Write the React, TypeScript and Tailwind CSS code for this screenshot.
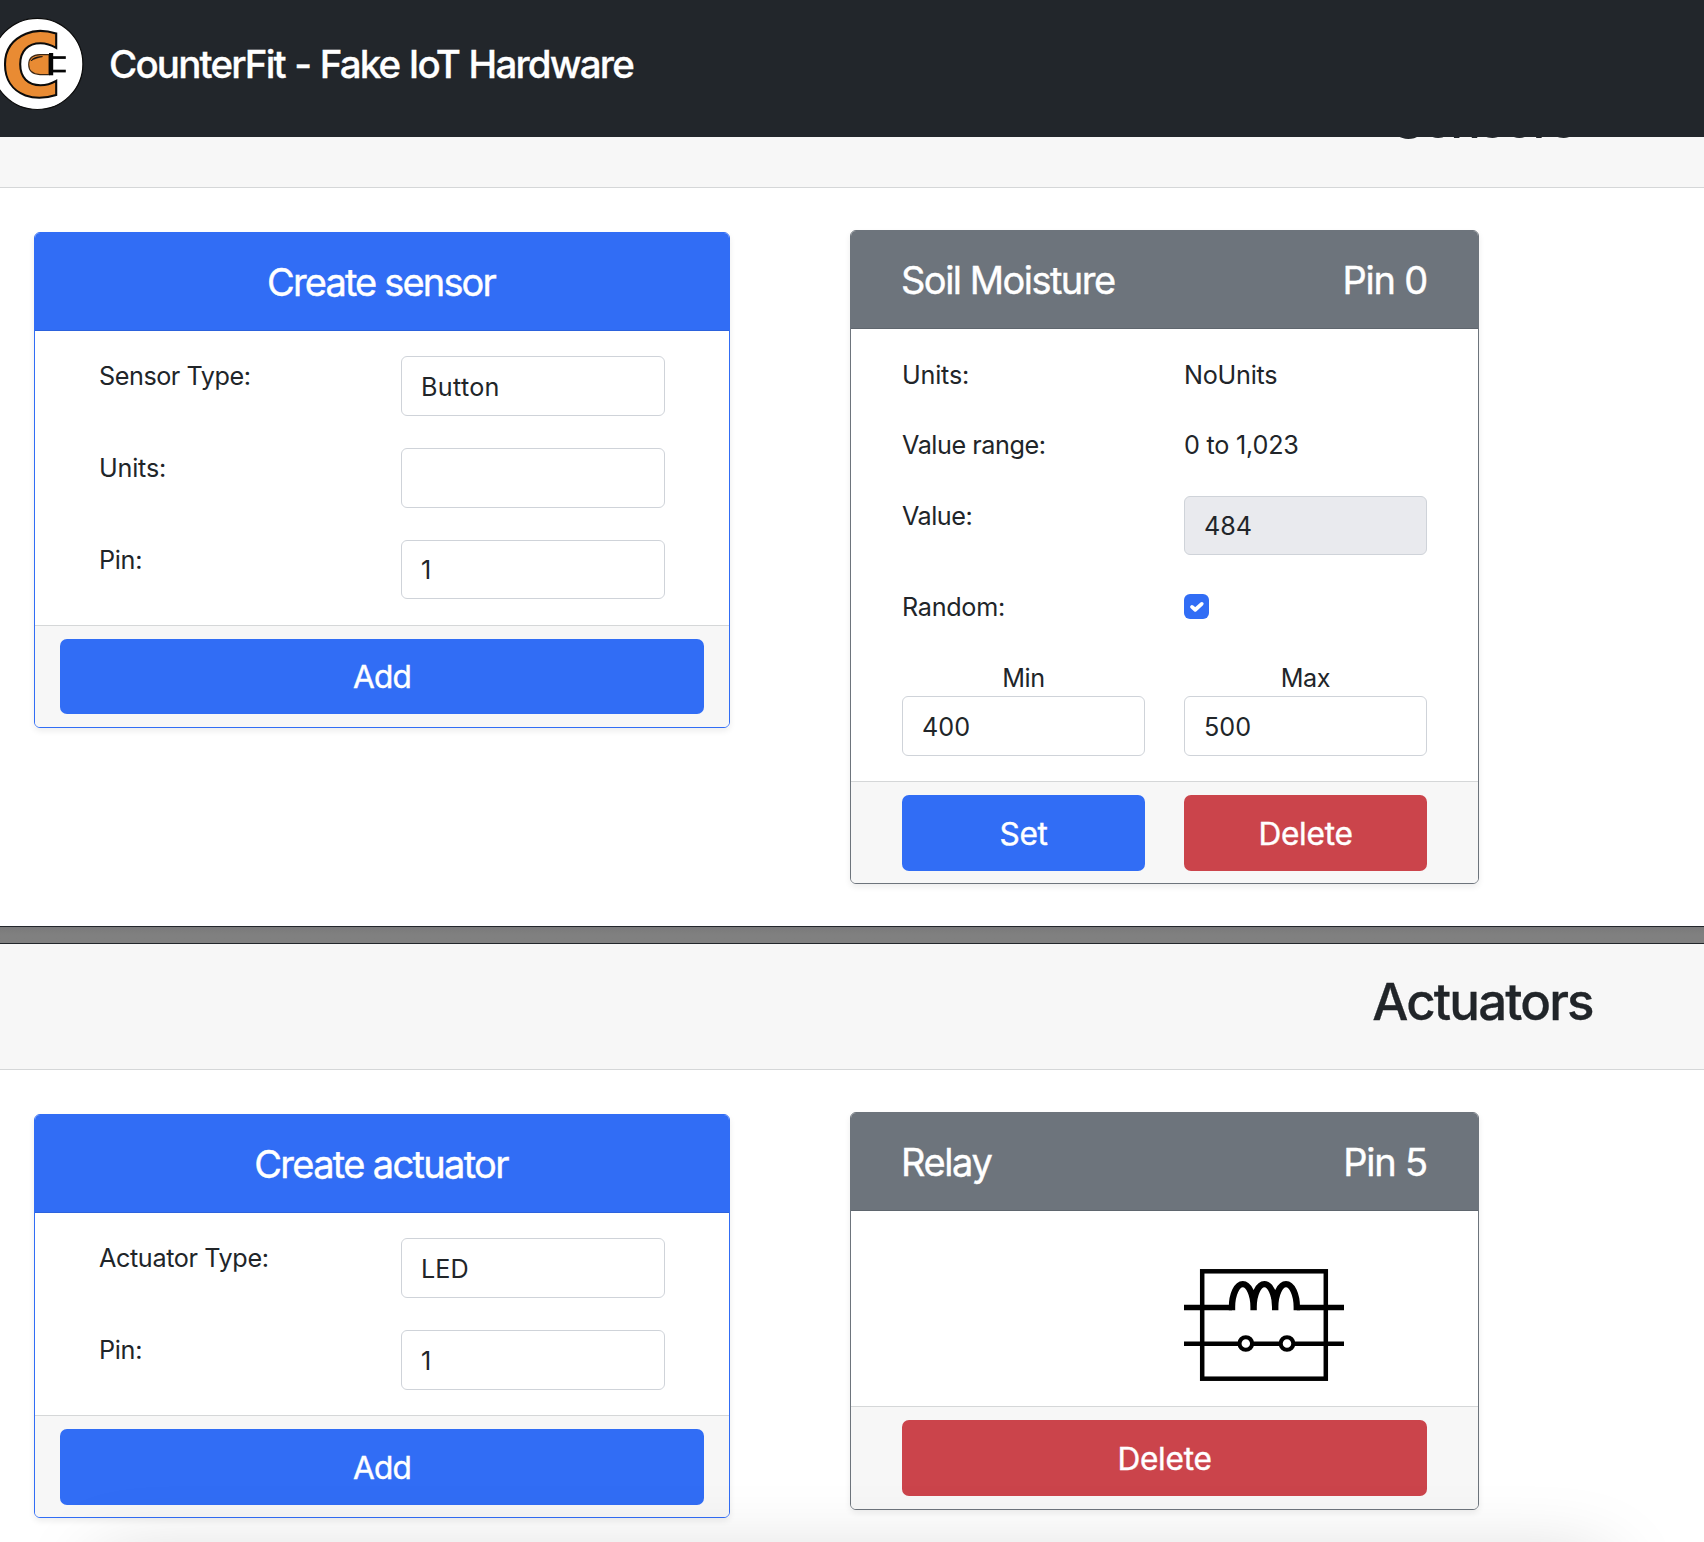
import type { ReactNode } from "react";

function Logo() {
  return (
    <svg className="absolute top-[17px] left-[-9px]" width="94" height="94" viewBox="-9 17 94 94" fill="none">
      <circle cx="37.3" cy="63.9" r="45.6" fill="#fff" stroke="#0b0b0b" strokeWidth="1.2" />
      <path
        d="M56.2 33.4C46 30.4 34 30.2 26 33.7C12 39.5 5 50 5 64.2C5 79 12 90.5 25.5 95.4C34 98.5 46 98.2 56.2 95L56.2 80.8C51 83.8 46 85.2 40.5 85.2C28 85.2 20.2 77.5 20.2 64.2C20.2 51 28 43.2 40.5 43.2C46 43.2 51 44.8 56.2 47.9Z"
        fill="#e98b33"
        stroke="#0b0b0b"
        strokeWidth="2.1"
      />
      <path d="M49 54.6H40C32.5 54.8 28.7 58.5 28.7 64.6C28.7 70.8 32.5 74.4 40 74.6H49Z" fill="#e98b33" stroke="#3a2614" strokeWidth="1.1" />
      <path d="M31 60.8C33 58 36.5 56.6 42.5 56.6C38 57.6 34.5 58.6 31 60.8Z" fill="#111" stroke="#111" strokeWidth="0.7" />
      <rect x="49" y="53" width="4.2" height="22.3" fill="#050505" />
      <rect x="53" y="56.2" width="12.8" height="2.7" fill="#050505" />
      <rect x="53" y="69.7" width="12.8" height="2.7" fill="#050505" />
    </svg>
  );
}

function RelaySymbol() {
  return (
    <svg className="block h-[144px] w-[160px]" viewBox="0 0 160 144" fill="none" stroke="#000">
      <rect x="18.2" y="34.3" width="123.6" height="107.4" strokeWidth="4.5" />
      <path d="M0 70.5H48M112.8 70.5H160" strokeWidth="5.3" />
      <path
        d="M48 73.2V70A10.8 22.9 0 0 1 69.6 70V73.2M69.6 73.2V70A10.8 22.9 0 0 1 91.2 70V73.2M91.2 73.2V70A10.8 22.9 0 0 1 112.8 70V73.2"
        strokeWidth="6.4"
      />
      <path d="M0 106.7H160" strokeWidth="4.4" />
      <circle cx="61.8" cy="106.5" r="6.3" fill="#fff" strokeWidth="4.1" />
      <circle cx="103" cy="106.5" r="6.3" fill="#fff" strokeWidth="4.1" />
    </svg>
  );
}

function Field({ value, className }: { value: string; className: string }) {
  return (
    <div
      className={`flex items-center rounded-[6px] border border-[#cfd3d9] pl-[19px] text-[25.2px] leading-[38px] ${className}`}
    >
      {value}
    </div>
  );
}

function Label({ children, className }: { children: ReactNode; className: string }) {
  return <div className={`text-[25.2px] leading-[40px] whitespace-nowrap ${className}`}>{children}</div>;
}

function Button({ children, className }: { children: ReactNode; className: string }) {
  return (
    <button className={`flex items-center justify-center rounded-[7px] text-[31.6px] leading-[47px] text-white [-webkit-text-stroke:0.4px_#fff] ${className}`}>
      {children}
    </button>
  );
}

const cardShadow = "shadow-[0_3px_6px_rgba(0,0,0,0.075)]";

function CreateCard({ title, titleClass, rows, footerClass, buttonClass }: {
  title: string;
  titleClass: string;
  rows: { label: string; value: string; labelClass: string; valueClass: string; rowClass: string }[];
  footerClass: string;
  buttonClass: string;
}) {
  return (
    <div className={`mt-[44px] ml-[34px] w-[696px] overflow-hidden rounded-[6px] border border-[#316df5] ${cardShadow}`}>
      <div className="flex h-[98px] items-center justify-center border-b border-[#2c62dd] bg-[#316df5] pr-[2px] text-[38px] leading-[46px] text-white [-webkit-text-stroke:0.4px_#fff]">
        <span className={titleClass}>{title}</span>
      </div>
      <div className="pt-[25px] pr-[64px] pl-[64px]">
        {rows.map((r) => (
          <div key={r.label} className={`flex justify-between ${r.rowClass}`}>
            <Label className={r.labelClass}>{r.label}</Label>
            <Field value={r.value} className={`w-[264px] ${r.valueClass}`} />
          </div>
        ))}
      </div>
      <div className={`border-t border-[#d5d7d8] bg-[#f7f7f7] px-[25px] pt-[13px] ${footerClass}`}>
        <Button className={`w-full bg-[#316df5] tracking-[-0.8px] ${buttonClass}`}>Add</Button>
      </div>
    </div>
  );
}

function DeviceCard({ name, nameClass, pin, children }: {
  name: string;
  nameClass: string;
  pin: string;
  children: ReactNode;
}) {
  return (
    <div className={`mt-[42px] w-[629px] overflow-hidden rounded-[6px] border border-[#6d747c] ${cardShadow}`}>
      <div className="flex h-[98px] items-center justify-between border-b border-[#5f666e] bg-[#6d747c] pt-px pr-[51px] pl-[50px] text-[38px] leading-[46px] text-white [-webkit-text-stroke:0.4px_#fff]">
        <span className={nameClass}>{name}</span>
        <span className="tracking-[-1.2px]">{pin}</span>
      </div>
      {children}
    </div>
  );
}

export default function App() {
  return (
    <div className="relative h-[1542px] w-[1704px] overflow-hidden bg-white font-['Inter',sans-serif] text-[#212529]">
      <header className="relative flex h-[137px] items-center bg-[#22262b] pb-[9px] pl-[109px]">
        <Logo />
        <h1 className="text-[38.5px] leading-[58px] font-medium tracking-[-1.83px] whitespace-nowrap text-white [word-spacing:1px] [-webkit-text-stroke:0.3px_#fff]">
          CounterFit - Fake IoT Hardware
        </h1>
      </header>

      <section className="h-[789px]">
        <div className="h-[51px] overflow-hidden border-b border-[#d5d7d8] bg-[#f7f7f7] pl-[1263px]">
          <h2 className="-mt-[48px] w-[441px] text-center text-[51px] leading-[61px] font-medium tracking-[-2.2px]">Sensors</h2>
        </div>
        <div className="flex items-start gap-[120px]">
          <CreateCard
            title="Create sensor"
            titleClass="tracking-[-1.85px]"
            footerClass="h-[102px]"
            buttonClass="h-[75px]"
            rows={[
              { label: "Sensor Type:", value: "Button", labelClass: "tracking-[-0.45px]", valueClass: "h-[60px] pt-px tracking-[0.3px]", rowClass: "h-[92px]" },
              { label: "Units:", value: "", labelClass: "tracking-[-0.2px]", valueClass: "h-[60px]", rowClass: "h-[92px]" },
              { label: "Pin:", value: "1", labelClass: "tracking-[-0.3px]", valueClass: "h-[59px]", rowClass: "h-[85px]" },
            ]}
          />
          <DeviceCard name="Soil Moisture" nameClass="tracking-[-1.52px]" pin="Pin 0">
            <div className="flex h-[452px] flex-col pt-[26px] pr-[51px] pl-[51px]">
              <div className="flex h-[70px]">
                <Label className="w-[282px] tracking-[-0.2px]">Units:</Label>
                <Label className="tracking-[-0.25px]">NoUnits</Label>
              </div>
              <div className="flex h-[71px]">
                <Label className="w-[282px] tracking-[-0.45px]">Value range:</Label>
                <Label className="tracking-[-0.22px]">0 to 1,023</Label>
              </div>
              <div className="flex h-[91px]">
                <Label className="w-[282px] tracking-[-0.5px]">Value:</Label>
                <Field value="484" className="h-[59px] w-[243px] bg-[#e9eaee]" />
              </div>
              <div className="flex h-[70px]">
                <Label className="w-[282px] tracking-[-0.3px]">Random:</Label>
                <span className="mt-[7px] flex h-[25px] w-[25px] items-center justify-center rounded-[6px] bg-[#316df5]">
                  <svg width="25" height="25" viewBox="0 0 20 20" fill="none" stroke="#fff" strokeWidth="3" strokeLinecap="round" strokeLinejoin="round">
                    <path d="M6.4 10.3L9 12.6L14.2 7.9" />
                  </svg>
                </span>
              </div>
              <div className="flex gap-[39px]">
                <div className="w-[243px]">
                  <Label className="h-[39px] pt-px text-center tracking-[-0.4px]">Min</Label>
                  <Field value="400" className="h-[60px] w-[243px] pt-px" />
                </div>
                <div className="w-[243px]">
                  <Label className="h-[39px] pt-px text-center tracking-[-0.4px]">Max</Label>
                  <Field value="500" className="h-[60px] w-[243px] pt-px" />
                </div>
              </div>
            </div>
            <div className="flex h-[102px] gap-[39px] border-t border-[#d5d7d8] bg-[#f7f7f7] px-[51px] pt-[13px]">
              <Button className="h-[76px] w-[243px] bg-[#316df5] tracking-[-0.3px]">Set</Button>
              <Button className="h-[76px] w-[243px] bg-[#cb444b] tracking-[-0.26px]">Delete</Button>
            </div>
          </DeviceCard>
        </div>
      </section>

      <div className="h-[18px] border-y border-[#22262b] bg-linear-to-b from-[#7a7a7a] to-[#808080] to-50%" />

      <section>
        <div className="h-[126px] border-b border-[#d5d7d8] bg-[#f7f7f7] pt-[27px] pl-[1262px]">
          <h2 className="w-[441px] text-center text-[51px] leading-[61px] font-medium tracking-[-1.85px] [-webkit-text-stroke:0.3px_#212529]">Actuators</h2>
        </div>
        <div className="flex items-start gap-[120px]">
          <CreateCard
            title="Create actuator"
            titleClass="tracking-[-1.67px]"
            footerClass="h-[102px]"
            buttonClass="h-[76px]"
            rows={[
              { label: "Actuator Type:", value: "LED", labelClass: "tracking-[-0.38px]", valueClass: "h-[60px] pt-px", rowClass: "h-[92px]" },
              { label: "Pin:", value: "1", labelClass: "tracking-[-0.3px]", valueClass: "h-[60px] pt-px", rowClass: "h-[85px]" },
            ]}
          />
          <DeviceCard name="Relay" nameClass="tracking-[-1.4px]" pin="Pin 5">
            <div className="flex h-[195px] pt-[26px] pl-[333px]">
              <RelaySymbol />
            </div>
            <div className="h-[103px] border-t border-[#d5d7d8] bg-[#f7f7f7] px-[51px] pt-[13px]">
              <Button className="h-[76px] w-full bg-[#cb444b] tracking-[-0.26px]">Delete</Button>
            </div>
          </DeviceCard>
        </div>
      </section>

      <div className="pointer-events-none absolute top-[1566px] left-[100px] h-[60px] w-[1504px] shadow-[0_0_80px_rgba(0,0,0,0.22)]" />
    </div>
  );
}
